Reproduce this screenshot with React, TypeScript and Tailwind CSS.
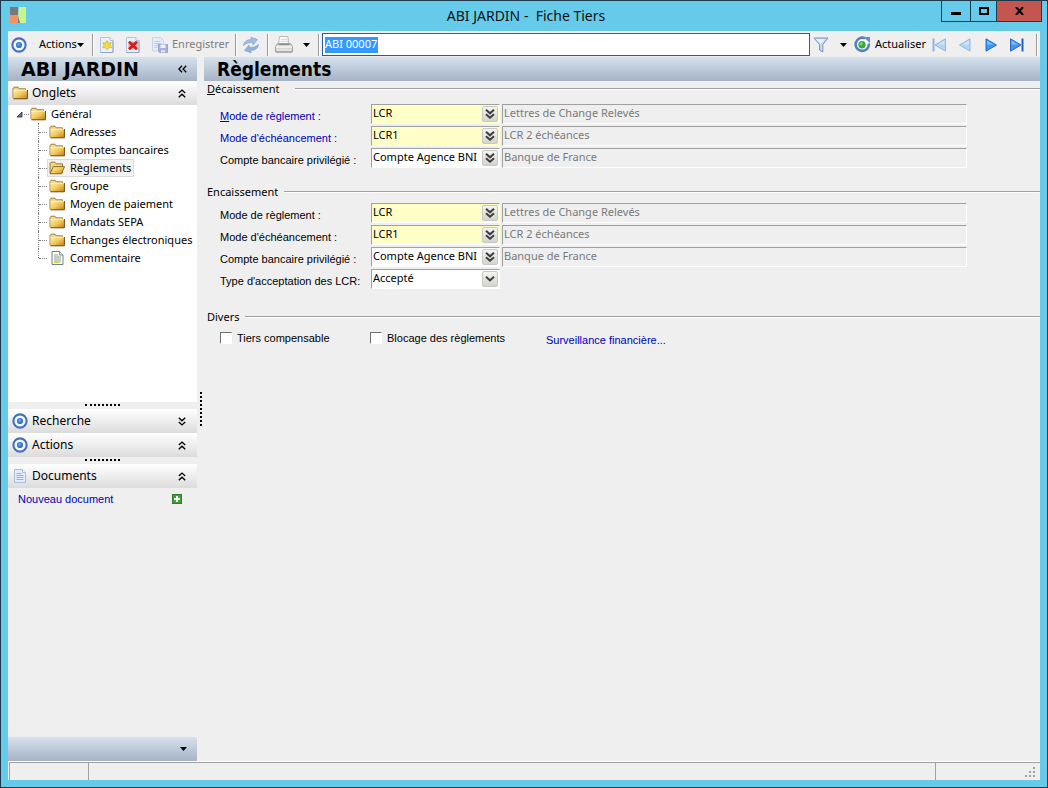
import React from "react";

const chrome = "bg-gradient-to-b from-[#d6e2ee] to-[#a5b3c5]";
const ui = "font-['Noto_Sans',sans-serif]";
const sans = "font-['Liberation_Sans',sans-serif]";

function Caret() {
  return (
    <svg width="7" height="4" viewBox="0 0 7 4" aria-hidden="true">
      <path d="M0 0h7L3.5 4z" fill="#000" />
    </svg>
  );
}

function Target() {
  return (
    <svg width="16" height="16" viewBox="0 0 16 16" aria-hidden="true">
      <circle cx="8" cy="8" r="6.6" fill="#f4f8fd" stroke="#4472b8" strokeWidth="2.1" />
      <circle cx="8" cy="8" r="3.1" fill="#3a78cc" />
      <circle cx="7.6" cy="7.4" r="1.4" fill="#6aa3e6" />
    </svg>
  );
}

function Folder({ open = false }: { open?: boolean }) {
  return (
    <svg width="16" height="14" viewBox="0 0 16 14" className="shrink-0" aria-hidden="true">
      <defs>
        <linearGradient id="fold" x1="0" y1="0" x2="1" y2="1">
          <stop offset="0" stopColor="#fdf0b0" />
          <stop offset="0.5" stopColor="#f0c95c" />
          <stop offset="1" stopColor="#c08018" />
        </linearGradient>
      </defs>
      <path d="M1 12V2.5L2 1.2h4l1.2 1.6h6.3V12z" fill="#f0d486" stroke="#94742c" strokeWidth="0.9" />
      {open ? (
        <path d="M1 12.8 4.3 5.6h11.2l-3 7.2z" fill="url(#fold)" stroke="#8a6418" strokeWidth="0.9" />
      ) : (
        <>
          <path d="M1.5 4h13.8v8.7H1.5z" fill="url(#fold)" />
          <path d="M1.5 12.8h13.9V4" fill="none" stroke="#6e4a10" strokeWidth="1" />
          <path d="M1.3 4.2h13.5" stroke="#fff6cf" strokeWidth="0.8" />
        </>
      )}
    </svg>
  );
}

function Note() {
  return (
    <svg width="16" height="14" viewBox="0 0 16 14" className="shrink-0" aria-hidden="true">
      <path d="M3 .5h7.5L14 4v9.5H3z" fill="#fdfde6" stroke="#6f7f8f" />
      <path d="M10.5.5V4H14" fill="#dfe5d0" stroke="#6f7f8f" strokeWidth="0.8" />
      <path d="M5 4h4M5 6h7M5 8h7M5 10h7" stroke="#7e93a6" strokeWidth="0.9" />
      <path d="M5 11.5h6" stroke="#e2cf40" />
    </svg>
  );
}

function BlueDoc() {
  return (
    <svg width="16" height="16" viewBox="0 0 16 16" aria-hidden="true">
      <path d="M2.5 1.5h8l3 3v10h-11z" fill="#e3edfc" stroke="#a9bddd" />
      <path d="M10.5 1.5v3h3" fill="#fff" stroke="#a9bddd" />
      <path d="M4.5 5.5h5M4.5 7.5h7M4.5 9.5h7M4.5 11.5h7" stroke="#8fb1e4" />
    </svg>
  );
}

function PageIcon({ kind }: { kind: "star" | "cross" }) {
  return (
    <svg width="16" height="16" viewBox="0 0 16 16" aria-hidden="true">
      <path d="M1.5.5h9.5l3 3v12H1.500z" fill="#eaf1fb" stroke="#b4c4dc" />
      <path d="M11 .5v3h3" fill="#fff" stroke="#a9bcd8" />
      <path d="M1.500 15.500H14V4" fill="none" stroke="#8ea6c8" />
      {kind === "star" ? (
        <path d="m8 3.500 1.300 2.600 2.900-.6-1.100 2.700 1.600 2.400-2.900.1-1.600 2.100-1.600-2-2.900-.1L5 8.200 3.900 5.600l2.800.5z" fill="#f3dc3c" stroke="#cbb54e" strokeWidth="0.8" />
      ) : (
        <>
          <path d="M3.500 4.500h9v8h-9z" fill="#ee9a96" />
          <path d="m4 4.800 8 7.400M12 4.800l-8 7.400" stroke="#cf1c1c" strokeWidth="2.600" />
        </>
      )}
    </svg>
  );
}

function SaveIcon() {
  return (
    <svg width="16" height="16" viewBox="0 0 16 16" className="shrink-0" aria-hidden="true">
      <path d="M.5.500h8l3 3v10.500H.5z" fill="#e6ecf7" stroke="#c9d3e6" />
      <path d="M2.500 4.500h6M2.500 6.500h7M2.500 8.500h4M2.500 10.500h3" stroke="#bccae2" />
      <path d="M6.500 7.500h9v8h-8l-1-1z" fill="#a9b2da" stroke="#9aa3cf" />
      <path d="M8.500 7.500h5v3.500h-5z" fill="#eef2fb" />
      <path d="M9 13h4v2.500H9z" fill="#d8ddf0" />
    </svg>
  );
}

function SyncIcon() {
  return (
    <svg width="18" height="18" viewBox="0 0 18 18" aria-hidden="true">
      <g transform="rotate(-12 9 9)">
        <path d="M1.500 8C2.500 4.500 6 2.800 10.500 3.800V1.300L16.500 5l-5.500 4.300V7C7.500 6 4.500 6.300 1.500 8z" fill="#a3bbe0" stroke="#8aa6d0" strokeWidth="0.700" />
        <path d="M16.500 10C15.500 13.500 12 15.200 7.500 14.200v2.500L1.500 13 7 8.700V11c3.500 1 6.500.7 9.500-1z" fill="#93b0dc" stroke="#86a2cd" strokeWidth="0.700" />
      </g>
    </svg>
  );
}

function Printer() {
  return (
    <svg width="18" height="17" viewBox="0 0 18 17" aria-hidden="true">
      <path d="M4.500.5h8.500l.5 7h-10z" fill="#f7f7f7" stroke="#b8b8b8" />
      <path d="M6 3.500h6M5.500 5.500h7" stroke="#dedede" />
      <path d="M2.500 7.500h13l2 3v5.500H.5v-5.500z" fill="#d6d6d6" stroke="#a3a3a3" />
      <path d="M3.500 8.500h11" stroke="#8a8a8a" />
      <path d="M1 11h16" stroke="#f8f8f8" strokeWidth="1.400" />
      <path d="M2 14h14" stroke="#efefef" />
      <path d="M1 16h16" stroke="#999" />
    </svg>
  );
}

function Funnel() {
  return (
    <svg width="16" height="16" viewBox="0 0 16 16" aria-hidden="true">
      <path d="M1 1h14L9.800 7.500V15L6.500 13V7.500z" fill="#c8d7ee" stroke="#7893bd" />
      <path d="M3 2.200h9L8 6.800z" fill="#edf4fc" />
    </svg>
  );
}

function ReloadIcon() {
  return (
    <svg width="17" height="17" viewBox="0 0 17 17" className="shrink-0" aria-hidden="true">
      <path d="M11 2.300A6.600 6.600 0 1 0 14.800 7.500" fill="#fff" stroke="#5580bd" strokeWidth="2.600" />
      <path d="M9.500 1H16v6z" fill="#5f8dd0" />
      <circle cx="8" cy="8.800" r="3.700" fill="#2fae3a" />
      <circle cx="7.200" cy="7.700" r="1.500" fill="#7fdc7a" />
    </svg>
  );
}

function NavIcon({ end = false, back = false }: { end?: boolean; back?: boolean }) {
  const stroke = back ? "#8fb3dd" : "#1f62c4";
  return (
    <svg width="16" height="14" viewBox="0 0 16 14" className={back ? "-scale-x-100" : ""} aria-hidden="true">
      <path d={end ? "M1.500.8 12 7 1.500 13.200z" : "M3 .8 13.500 7 3 13.200z"} fill={back ? "#b3d4f4" : "#3f97f2"} stroke={stroke} strokeWidth="0.900" />
      <path d={end ? "M2.500 2.500 9 6.500h-6.500z" : "M4 2.500l6.500 4H4z"} fill={back ? "#d2e7fa" : "#7fc0fb"} />
      {end && <path d="M13.500.5v13" stroke={stroke} strokeWidth="2" />}
    </svg>
  );
}

function Chevrons({ up = false }: { up?: boolean }) {
  return (
    <svg width="8" height="9" viewBox="0 0 8 9" className={up ? "rotate-180" : ""} aria-hidden="true">
      <path d="M.8.700 4 3.700 7.200.700M.8 4.900 4 7.900l3.200-3" fill="none" stroke="#000" strokeWidth="1.400" />
    </svg>
  );
}

function Separator() {
  return <span className="h-[22px] w-[2px] shrink-0 border-r border-l border-r-white border-l-[#9a9a9a]" />;
}

function IconButton({ label, width = "w-[26px]", children }: { label: string; width?: string; children: React.ReactNode }) {
  return (
    <button type="button" aria-label={label} className={`flex h-full shrink-0 items-center justify-center ${width}`}>
      {children}
    </button>
  );
}

function TitleBar() {
  return (
    <header className="grid h-[30px] grid-cols-[1fr_auto_1fr] items-start pr-[5px] pl-[9px]">
      <svg width="16" height="16" viewBox="0 0 16 16" className="mt-[6px]" aria-hidden="true">
        <path d="M0 0h8v8H0z" fill="#77797c" />
        <path d="M0 8h8v8H0z" fill="#f4915f" />
        <path d="M9 0h7v16h-6L8 10z" fill="#c6f58c" />
        <path d="M8 9l2 7H8z" fill="#77797c" />
      </svg>
      <h1 className={`whitespace-pre text-[14px] leading-[29px] text-[#111] ${ui}`}>ABI JARDIN -  Fiche Tiers</h1>
      <div className="flex h-[21px] justify-end">
        <button type="button" aria-label="Réduire" className="flex w-[29px] items-center justify-center border-b border-l border-[#1d3a4a]">
          <span className="mt-1 h-[3px] w-[10px] bg-black" />
        </button>
        <button type="button" aria-label="Agrandir" className="flex w-[26px] items-center justify-center border-b border-l border-[#1d3a4a]">
          <span className="h-2 w-[10px] border-2 border-black" />
        </button>
        <button type="button" aria-label="Fermer" className="flex w-[46px] items-center justify-center border border-t-0 border-[#1d3a4a] bg-[#c3574f]">
          <svg width="9" height="8" viewBox="0 0 9 8" aria-hidden="true">
            <path d="m1 0 7 8M8 0 1 8" stroke="#000" strokeWidth="2" />
          </svg>
        </button>
      </div>
    </header>
  );
}

function Toolbar() {
  return (
    <div role="toolbar" aria-label="Outils" className={`flex h-[26px] items-center border-t border-[#dff0f6] text-[11px] ${ui}`}>
      <span className="flex w-[22px] shrink-0 justify-center">
        <Target />
      </span>
      <button type="button" className="flex w-[62px] shrink-0 items-center pl-[9px]">
        Actions
        <Caret />
      </button>
      <Separator />
      <IconButton label="Nouveau"><PageIcon kind="star" /></IconButton>
      <IconButton label="Supprimer"><PageIcon kind="cross" /></IconButton>
      <button type="button" className="flex w-[89px] shrink-0 items-center gap-1 pl-[6px] text-[#7d7d7d]">
        <SaveIcon />
        Enregistrer
      </button>
      <Separator />
      <IconButton label="Synchroniser" width="w-[27px]"><SyncIcon /></IconButton>
      <span className="w-[3px] shrink-0" />
      <Separator />
      <IconButton label="Imprimer" width="w-[30px]"><Printer /></IconButton>
      <IconButton label="Options d'impression" width="w-[14px]"><Caret /></IconButton>
      <span className="w-[5px] shrink-0" />
      <Separator />
      <div className="ml-[2px] flex h-[23px] min-w-0 flex-1 items-center border border-[#2b5e97] bg-white pl-[2px]">
        <input
          aria-label="Code tiers"
          defaultValue="ABI 00007"
          className="h-[16px] w-[53px] bg-[#3399ff] text-[11px] text-white outline-none"
        />
      </div>
      <IconButton label="Filtrer" width="w-[22px]"><Funnel /></IconButton>
      <IconButton label="Options de filtre" width="w-[22px]"><Caret /></IconButton>
      <button type="button" className="flex w-[72px] shrink-0 items-center gap-1">
        <ReloadIcon />
        Actualiser
      </button>
      <IconButton label="Premier"><NavIcon back end /></IconButton>
      <IconButton label="Précédent"><NavIcon back /></IconButton>
      <IconButton label="Suivant"><NavIcon /></IconButton>
      <IconButton label="Dernier"><NavIcon end /></IconButton>
      <span className="w-[6px] shrink-0" />
      <Separator />
      <span className="w-[2px] shrink-0" />
    </div>
  );
}

function PanelHeader({ icon, title, up = false }: { icon: React.ReactNode; title: string; up?: boolean }) {
  return (
    <button type="button" className={`flex h-6 w-full shrink-0 items-center gap-1 bg-gradient-to-b from-white to-[#dcdcdc] pr-[11px] pl-1 text-[12px] ${ui}`}>
      {icon}
      <span className="flex-1 text-left">{title}</span>
      <Chevrons up={up} />
    </button>
  );
}

function Splitter() {
  return (
    <div className="flex h-[7px] shrink-0 items-start justify-center bg-[#efefef] pt-[2px]">
      <span className="w-[35px] border-t-2 border-dotted border-black" />
    </div>
  );
}

const leaves = [
  "Adresses",
  "Comptes bancaires",
  "Règlements",
  "Groupe",
  "Moyen de paiement",
  "Mandats SEPA",
  "Echanges électroniques",
  "Commentaire",
];

function Tree() {
  return (
    <nav aria-label="Onglets" className={`h-[297px] shrink-0 bg-white text-[11px] ${ui}`}>
      <div className="flex h-[18px] items-center pl-2">
        <svg width="7" height="7" viewBox="0 0 7 7" aria-hidden="true">
          <path d="M6 1v5H1z" fill="#777" stroke="#222" strokeWidth="0.8" />
        </svg>
        <span className="mx-[1px] w-[5px] border-t border-dotted border-[#808080]" />
        <Folder />
        <span className="ml-[5px]">Général</span>
      </div>
      <ul className="pl-[30px]">
        {leaves.map((leaf, i) => (
          <li key={leaf} className="flex h-[18px] items-center">
            <span className={`w-px self-start border-l border-dotted border-[#808080] ${i === leaves.length - 1 ? "h-[9px]" : "h-[18px]"}`} />
            <span className="w-[8px] shrink-0 border-t border-dotted border-[#808080]" />
            <a
              href="#"
              className={`flex h-[18px] items-center gap-[5px] border pr-[2px] whitespace-nowrap pl-px ${
                leaf === "Règlements" ? "border-[#dadada] bg-[#f2f2f2]" : "border-transparent"
              }`}
            >
              {leaf === "Commentaire" ? <Note /> : <Folder open={leaf === "Règlements"} />}
              {leaf}
            </a>
          </li>
        ))}
      </ul>
    </nav>
  );
}

function Sidebar() {
  return (
    <aside className="flex w-[189px] shrink-0 flex-col">
      <div className={`flex h-6 shrink-0 items-center justify-between pr-[10px] pl-[13px] ${chrome}`}>
        <h2 className="font-['DejaVu_Sans',sans-serif] text-[19px] leading-6 font-bold whitespace-nowrap">ABI JARDIN</h2>
        <button type="button" aria-label="Replier le panneau">
          <svg width="9" height="8" viewBox="0 0 9 8" aria-hidden="true">
            <path d="M4 .8.900 4 4 7.200M8.200.800 5.100 4l3.100 3.200" fill="none" stroke="#000" strokeWidth="1.300" />
          </svg>
        </button>
      </div>
      <PanelHeader icon={<Folder />} title="Onglets" up />
      <Tree />
      <Splitter />
      <PanelHeader icon={<Target />} title="Recherche" />
      <PanelHeader icon={<Target />} title="Actions" up />
      <Splitter />
      <PanelHeader icon={<BlueDoc />} title="Documents" up />
      <div className={`flex h-[22px] shrink-0 items-center justify-between pr-[15px] pl-[10px] text-[11px] text-[#0000b4] ${sans}`}>
        <a href="#">Nouveau document</a>
        <button type="button" aria-label="Ajouter un document">
          <svg width="10" height="10" viewBox="0 0 10 10" aria-hidden="true">
            <rect x="0.500" y="0.500" width="9" height="9" fill="#43a03c" stroke="#2d7d2a" />
            <path d="M5 2v6M2 5h6" stroke="#fff" strokeWidth="2" />
          </svg>
        </button>
      </div>
      <div className="flex-1" />
      <div className={`flex h-6 shrink-0 items-center justify-end pr-[10px] ${chrome}`}>
        <button type="button" aria-label="Configurer les panneaux" className="flex h-full items-center">
          <Caret />
        </button>
      </div>
    </aside>
  );
}

function Legend({ children, gap = "gap-[6px]" }: { children: React.ReactNode; gap?: string }) {
  return (
    <h3 className={`flex h-4 items-center pl-[3px] text-[11px] ${gap} ${ui}`}>
      {children}
      <span className="flex-1 border-t border-b border-t-[#a0a0a0] border-b-white" />
    </h3>
  );
}

const sunken = "border border-t-[#a0a0a0] border-l-[#a0a0a0] border-r-white border-b-white";
const dropButton = "flex h-4 w-4 items-center justify-center rounded-[2px] border border-[#c9c9c4] bg-gradient-to-b from-[#f4f4f0] to-[#d4d4cf]";

type FieldProps = {
  id: string;
  label: React.ReactNode;
  value: string;
  detail?: string;
  required?: boolean;
  link?: boolean;
};

function Field({ id, label, value, detail, required = false, link = false }: FieldProps) {
  const background = required ? "bg-[#ffffc8]" : "bg-white";
  return (
    <div className="flex h-[20px] gap-[2px]">
      <label htmlFor={id} className={`w-[149px] shrink-0 pt-[3px] text-[11px] leading-[18px] whitespace-nowrap ${sans} ${link ? "text-[#0000b4]" : ""}`}>
        {label}
      </label>
      <div className={`flex w-[129px] shrink-0 items-center pr-[1px] ${sunken} ${background}`}>
        {detail ? (
          <>
            <input id={id} defaultValue={value} className={`h-4 min-w-0 flex-1 self-start bg-transparent pl-[1px] text-[11px] leading-4 outline-none ${ui}`} />
            <button type="button" aria-label="Choisir" className={`shrink-0 ${dropButton}`}>
              <svg width="10" height="10" viewBox="0 0 10 10" aria-hidden="true">
                <path d="M1 .8 5 4.300 9 .8M1 5.200l4 3.500 4-3.500" fill="none" stroke="#3d3d3d" strokeWidth="2" />
              </svg>
            </button>
          </>
        ) : (
          <div className="relative h-full flex-1">
            <select id={id} defaultValue={value} className={`block h-4 w-full appearance-none bg-transparent pl-[1px] text-[11px] leading-4 outline-none ${ui}`}>
              <option>{value}</option>
            </select>
            <span className={`pointer-events-none absolute top-px right-0 ${dropButton}`}>
              <svg width="10" height="6" viewBox="0 0 10 6" aria-hidden="true">
                <path d="m1 .8 4 3.700L9 .8" fill="none" stroke="#3d3d3d" strokeWidth="2" />
              </svg>
            </span>
          </div>
        )}
      </div>
      {detail && (
        <input
          readOnly
          aria-label="Libellé"
          value={detail}
          className={`min-w-0 flex-1 bg-[#efefef] pb-[2px] pl-[1px] text-[11px] text-[#7a7a7a] outline-none ${sunken} ${ui}`}
        />
      )}
    </div>
  );
}

function Check({ label }: { label: string }) {
  return (
    <label className="flex h-[18px] items-center gap-[5px]">
      <input type="checkbox" className="size-3 appearance-none border border-t-[#6e6e6e] border-r-white border-b-white border-l-[#6e6e6e] bg-white" />
      {label}
    </label>
  );
}

function Content() {
  return (
    <main className="flex min-w-0 flex-1 flex-col">
      <div className={`h-6 shrink-0 pl-[13px] ${chrome}`}>
        <h2 className="font-['DejaVu_Sans_Condensed','DejaVu_Sans',sans-serif] text-[19px] leading-6 font-bold">Règlements</h2>
      </div>
      <section>
        <Legend gap="gap-[15px]">
          <span>
            <u>D</u>écaissement
          </span>
        </Legend>
        <div className="flex flex-col gap-[2px] pt-[7px] pr-[73px] pl-4">
          <Field id="d-mode" link required label={<><u>M</u>ode de règlement :</>} value="LCR" detail="Lettres de Change Relevés" />
          <Field id="d-ech" link required label="Mode d'échéancement :" value="LCR1" detail="LCR 2 échéances" />
          <Field id="d-cpt" label="Compte bancaire privilégié :" value="Compte Agence BNI" detail="Banque de France" />
        </div>
      </section>
      <section className="pt-4">
        <Legend>Encaissement</Legend>
        <div className="flex flex-col gap-[2px] pt-[3px] pr-[73px] pl-4">
          <Field id="e-mode" required label="Mode de règlement :" value="LCR" detail="Lettres de Change Relevés" />
          <Field id="e-ech" required label="Mode d'échéancement :" value="LCR1" detail="LCR 2 échéances" />
          <Field id="e-cpt" label="Compte bancaire privilégié :" value="Compte Agence BNI" detail="Banque de France" />
          <Field id="e-type" label="Type d'acceptation des LCR:" value="Accepté" />
        </div>
      </section>
      <section className="pt-5">
        <Legend>Divers</Legend>
        <div className={`grid grid-cols-[150px_176px_auto] justify-start pt-[4px] pl-4 text-[11px] ${sans}`}>
          <Check label="Tiers compensable" />
          <Check label="Blocage des règlements" />
          <a href="#" className="leading-[22px] text-[#0000b4]">Surveillance financière...</a>
        </div>
      </section>
    </main>
  );
}

function StatusBar() {
  return (
    <footer className="flex h-[19px] shrink-0 border-t border-white pl-px">
      <div className="w-[79px] border-t border-l border-[#a0a0a0]" />
      <div className="flex-1 border-t border-l border-[#a0a0a0]" />
      <div className="flex w-[105px] items-end justify-end border-t border-l border-[#a0a0a0] pr-1 pb-[2px]">
        <svg width="11" height="11" viewBox="0 0 11 11" aria-hidden="true">
          <path d="M8 0h2v2H8zM4 4h2v2H4zM8 4h2v2H8zM0 8h2v2H0zM4 8h2v2H4zM8 8h2v2H8z" fill="#a0a0a0" />
        </svg>
      </div>
    </footer>
  );
}

export default function App() {
  return (
    <div className="flex min-h-screen flex-col border border-[#1d3a4a] bg-[#66cbea] text-black">
      <TitleBar />
      <div className="mx-[7px] mb-[7px] flex flex-1 flex-col bg-[#efefef]">
        <Toolbar />
        <div className="flex flex-1">
          <Sidebar />
          <div className="w-[7px] shrink-0 pt-[335px]">
            <span className="ml-[3px] block h-[34px] w-[2px] border-l-2 border-dotted border-black" />
          </div>
          <Content />
        </div>
        <StatusBar />
      </div>
    </div>
  );
}
